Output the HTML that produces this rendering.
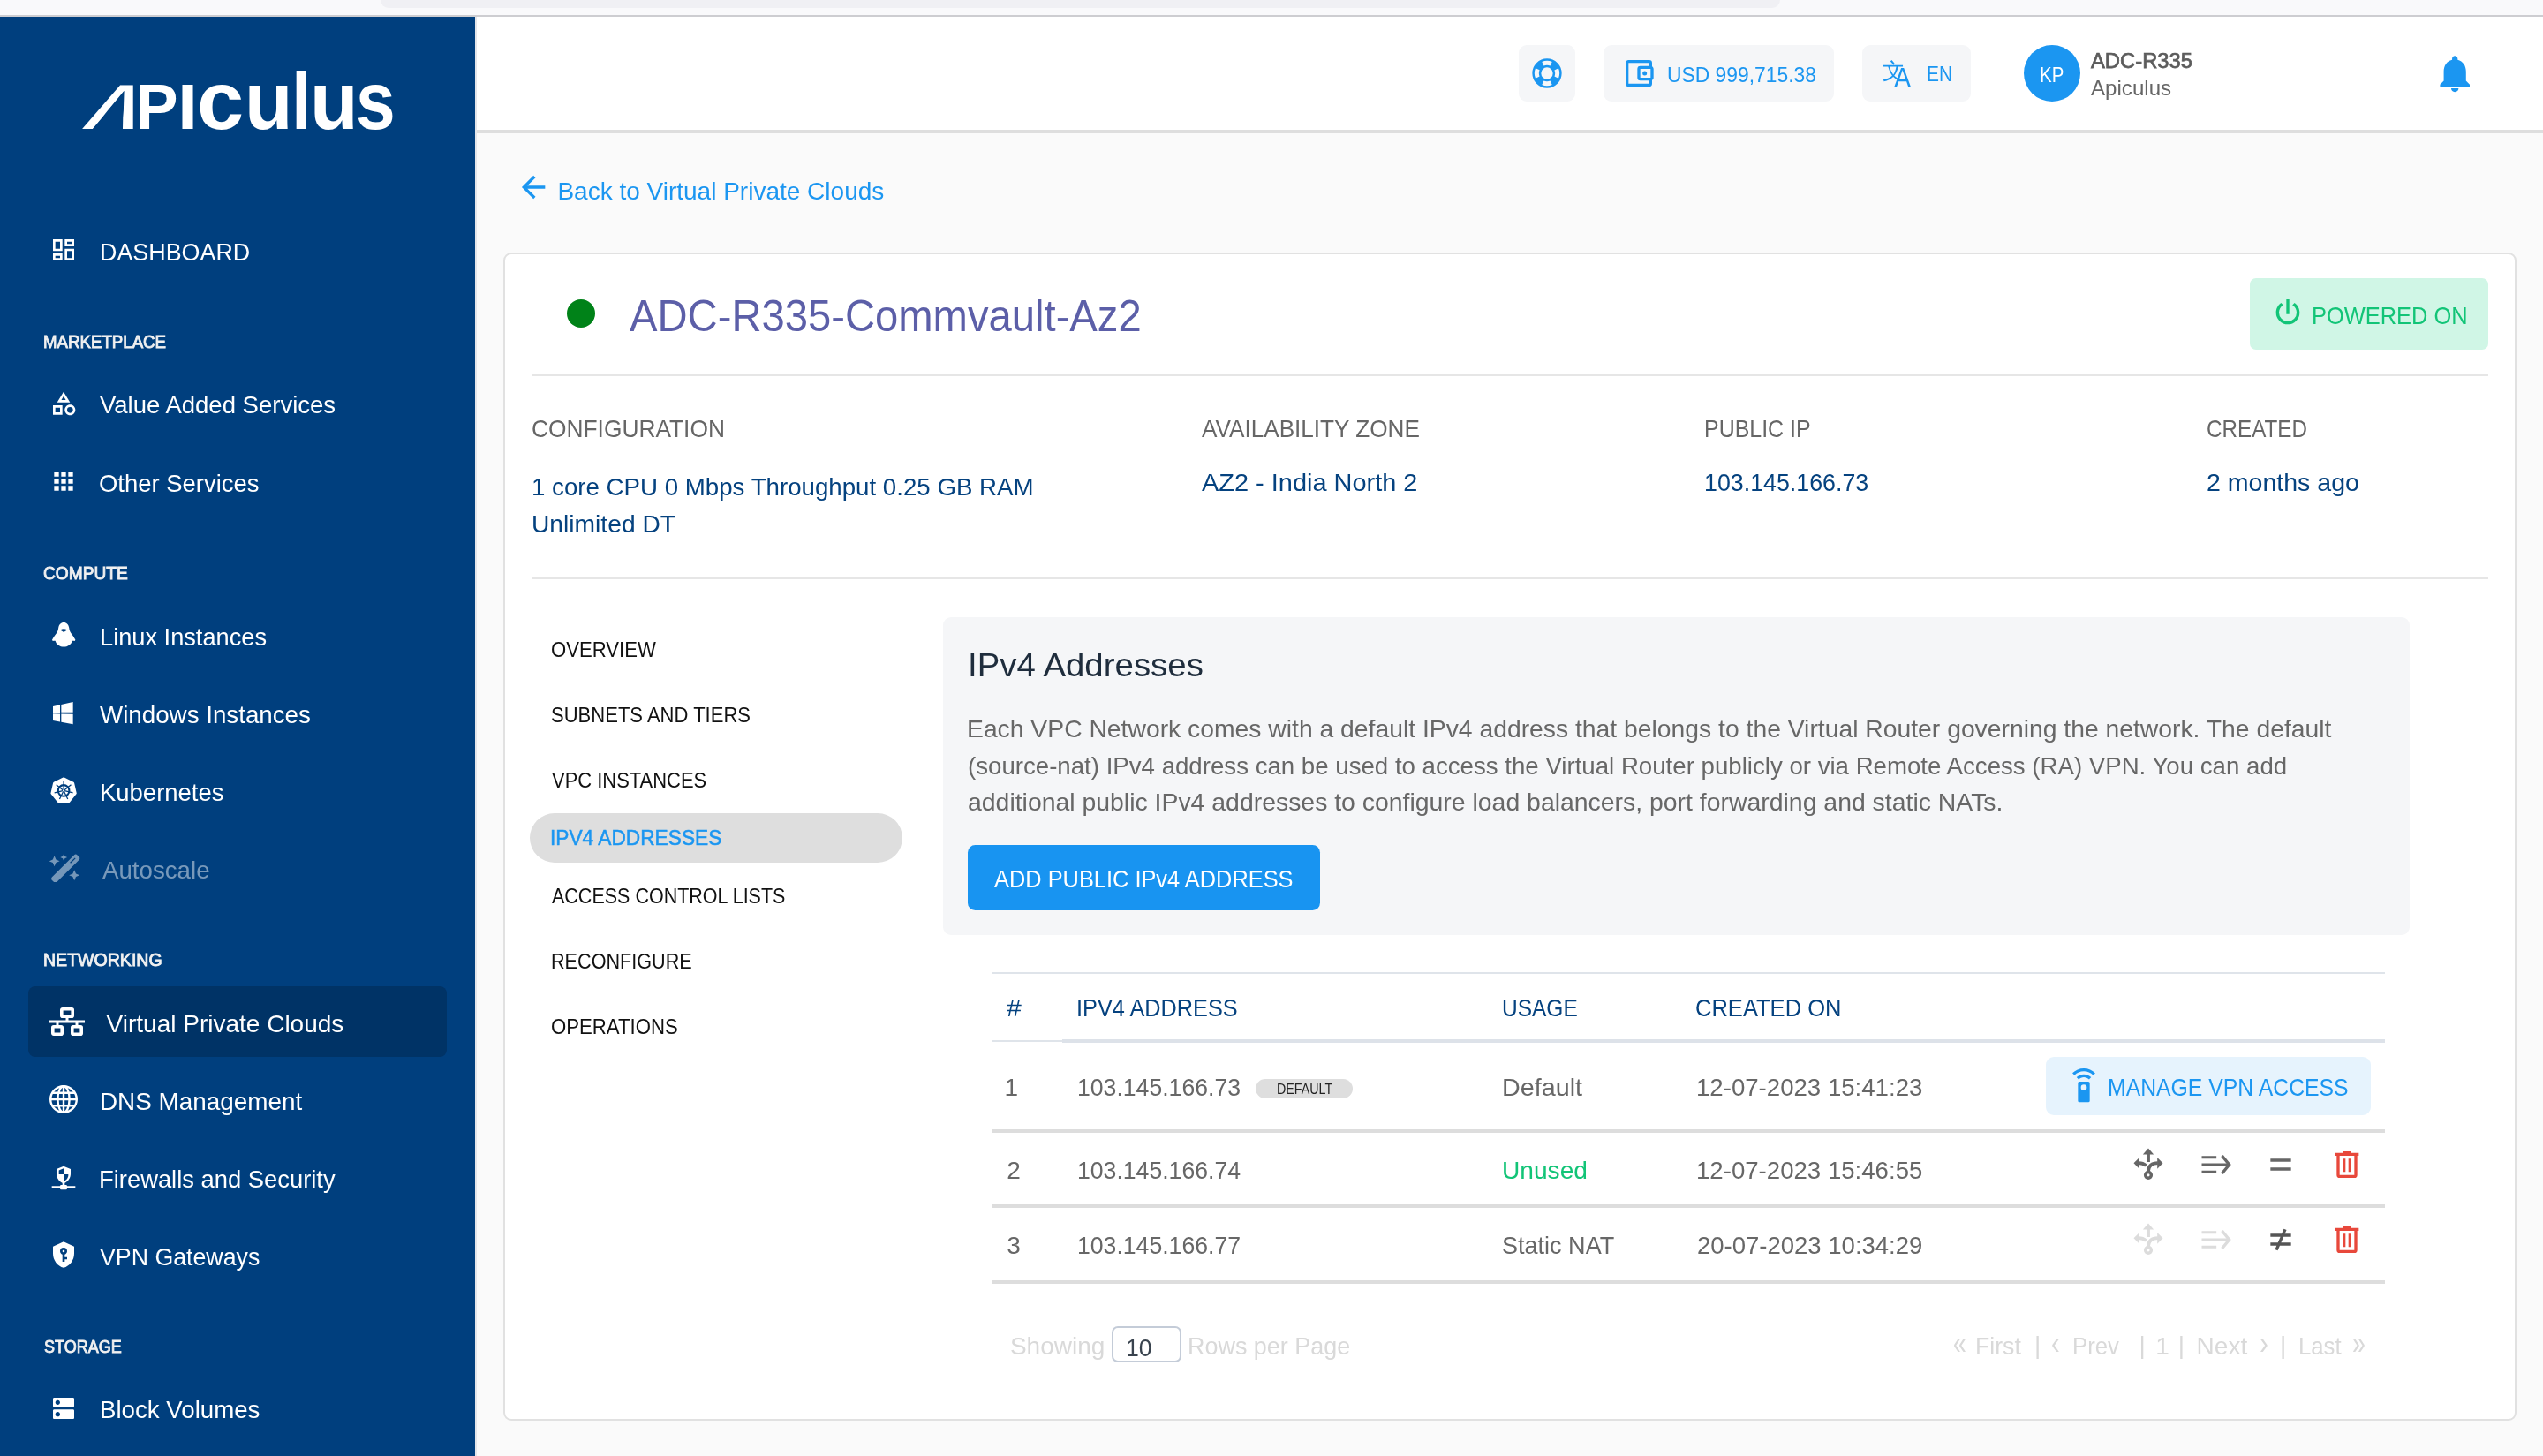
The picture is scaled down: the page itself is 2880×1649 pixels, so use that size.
<!DOCTYPE html>
<html lang="en"><head><meta charset="utf-8"><title>Apiculus - Virtual Private Clouds</title>
<style>
html,body{margin:0;padding:0}
body{width:2880px;height:1649px;position:relative;overflow:hidden;background:#fafafa;font-family:"Liberation Sans",sans-serif}
.t{position:absolute;white-space:pre;line-height:1;transform-origin:0 50%}
.b,.i{position:absolute;display:block}
.l{display:inline-block;position:relative;width:0;white-space:pre;line-height:1;transform-origin:0 50%;vertical-align:baseline}
#w{position:absolute;left:0;top:0;width:2880px;height:1649px;overflow:hidden;will-change:transform}
</style></head><body><div id="w">
<div class="b" style="left:0px;top:0px;width:2880px;height:17px;background:#f9f9fb;"></div>
<div class="b" style="left:431px;top:-12px;width:1585px;height:21px;background:#f0f0f4;border-radius:9px;"></div>
<div class="b" style="left:0px;top:17px;width:2880px;height:2px;background:#cdcdd1;"></div>
<nav>
<div class="b" style="left:0px;top:19px;width:538px;height:1630px;background:#003f7e;"></div>
<div class="b" style="left:538px;top:19px;width:2px;height:1630px;background:#e4e6ea;"></div>
<div class="b" style="left:0;top:67.5px;font-size:0;line-height:0;white-space:nowrap;color:#fff;font-weight:700"><span class="l" style="left:90.9px;font-size:72px;color:#fff;font-weight:700;transform:scaleX(1.19) skewX(-20deg);transform-origin:0 60.95px;clip-path:polygon(-3.00px -3.00px,56.00px -3.00px,56.00px 76.00px,40.33px 63.95px,40.33px 60.95px,35.94px 48.29px,33.62px 40.49px,25.98px 17.84px,18.38px 40.49px,16.06px 48.29px,11.66px 60.95px,11.66px 63.95px,-3.00px 76.00px);">A</span><span class="l" style="left:154.2px;font-size:72px;color:#fff;font-weight:700;transform:scaleX(0.9905);">P</span><span class="l" style="left:201.4px;font-size:72px;color:#fff;font-weight:700;transform:scaleX(1.1500);">I</span><span class="l" style="left:223.1px;font-size:92px;color:#fff;font-weight:700;transform:scaleX(1.0391);">c</span><span class="l" style="left:276.6px;font-size:92px;color:#fff;font-weight:700;transform:scaleX(0.9696);">u</span><span class="l" style="left:329.6px;font-size:90.5px;color:#fff;font-weight:700;transform:scaleX(0.9077);">l</span><span class="l" style="left:351.4px;font-size:92px;color:#fff;font-weight:700;transform:scaleX(0.9717);">u</span><span class="l" style="left:403.4px;font-size:92px;color:#fff;font-weight:700;transform:scaleX(0.8733);">s</span></div>
<svg class="i" style="left:56px;top:267.3px;" width="32" height="32" viewBox="0 0 24 24"><path fill="#fff" d="M19,5V7H15V5H19M9,5V11H5V5H9M19,13V19H15V13H19M9,17V19H5V17H9M21,3H13V9H21V3M11,3H3V13H11V3M21,11H13V21H21V11M11,15H3V21H11V15Z"/></svg>
<span class="t" style="left:113.3px;top:271.5px;font-size:28px;color:#fff;transform:scaleX(0.9601);">DASHBOARD</span>
<span class="t" style="left:48.7px;top:377.1px;font-size:20.2px;color:#f1f1f1;transform:scaleX(0.9250);-webkit-text-stroke:.85px #f1f1f1;">MARKETPLACE</span>
<svg class="i" style="left:56px;top:441.2px;" width="32" height="32" viewBox="0 0 24 24"><path fill="#fff" d="M11,13.5V21.5H3V13.5H11M9,15.5H5V19.5H9V15.5M12,2L17.5,11H6.5L12,2M12,5.86L10.08,9H13.92L12,5.86M17.5,13C20,13 22,15 22,17.5C22,20 20,22 17.5,22C15,22 13,20 13,17.5C13,15 15,13 17.5,13M17.5,15A2.5,2.5 0 0,0 15,17.5A2.5,2.5 0 0,0 17.5,20A2.5,2.5 0 0,0 20,17.5A2.5,2.5 0 0,0 17.5,15Z"/></svg>
<span class="t" style="left:112.5px;top:445.4px;font-size:28px;color:#fff;transform:scaleX(0.9823);">Value Added Services</span>
<svg class="i" style="left:56px;top:528.8px;" width="32" height="32" viewBox="0 0 24 24"><path fill="#fff" d="M16,20H20V16H16M16,14H20V10H16M10,8H14V4H10M16,8H20V4H16M10,14H14V10H10M4,14H8V10H4M4,20H8V16H4M10,20H14V16H10M4,8H8V4H4V8Z"/></svg>
<span class="t" style="left:112.0px;top:533.5px;font-size:28px;color:#fff;transform:scaleX(0.9805);">Other Services</span>
<span class="t" style="left:48.7px;top:638.8px;font-size:20.2px;color:#f1f1f1;transform:scaleX(0.9490);-webkit-text-stroke:.85px #f1f1f1;">COMPUTE</span>
<svg class="i" style="left:56px;top:703.1px;" width="32" height="32" viewBox="0 0 32 32"><path fill="#fff" d="M16.2,2C19.5,2 21.6,4.5 22.2,8C22.6,10.5 23,12 24.5,14.3C26.5,17.2 28.6,19.8 29.4,21.8L28.6,22.9C27.6,22.7 26.6,22.6 25.8,22.7C24.6,27 20.6,29.6 16.2,29.6C11.8,29.6 7.8,27 6.6,22.7C5.8,22.6 4.8,22.7 3.8,22.9L3,21.8C3.8,19.8 5.9,17.2 7.9,14.3C9.4,12 9.8,10.5 10.2,8C10.8,4.5 12.9,2 16.2,2Z"/><path fill="#003f7e" d="M12.1,10.4Q16.2,8.2 20.1,10.4L16.2,12.9Z"/></svg>
<span class="t" style="left:112.5px;top:707.5px;font-size:28px;color:#fff;transform:scaleX(0.9715);">Linux Instances</span>
<svg class="i" style="left:56px;top:790.8px;" width="32" height="32" viewBox="0 0 24 24"><path fill="#fff" d="M3,12V6.75L9,5.43V11.91L3,12M20,3V11.75L10,11.9V5.21L20,3M3,13L9,13.09V19.9L3,18.75V13M20,13.25V22L10,20.09V13.1L20,13.25Z"/></svg>
<span class="t" style="left:112.5px;top:795.6px;font-size:28px;color:#fff;transform:scaleX(0.9904);">Windows Instances</span>
<svg class="i" style="left:56px;top:879.2px;" width="32" height="32" viewBox="0 0 32 32"><polygon fill="#fff" stroke="#fff" stroke-width="2.8" stroke-linejoin="round" points="16.10,2.85 26.73,7.97 29.36,19.48 22.00,28.70 10.20,28.70 2.84,19.48 5.47,7.97"/><g stroke="#003f7e" fill="none"><circle cx="16.1" cy="16.45" r="6.3" stroke-width="2.1"/><g stroke-width="1.3"><line x1="16.1" y1="16.45" x2="16.10" y2="5.75"/><line x1="16.1" y1="16.45" x2="24.47" y2="9.78"/><line x1="16.1" y1="16.45" x2="26.53" y2="18.83"/><line x1="16.1" y1="16.45" x2="20.74" y2="26.09"/><line x1="16.1" y1="16.45" x2="11.46" y2="26.09"/><line x1="16.1" y1="16.45" x2="5.67" y2="18.83"/><line x1="16.1" y1="16.45" x2="7.73" y2="9.78"/></g></g><circle cx="16.1" cy="16.45" r="1.1" fill="#fff"/></svg>
<span class="t" style="left:112.8px;top:883.6px;font-size:28px;color:#fff;transform:scaleX(0.9807);">Kubernetes</span>
<svg class="i" style="left:55.9px;top:966.8px;opacity:.46;" width="36" height="32" viewBox="0 0 36 32"><g fill="#fff"><rect x="-3.9" y="-20.2" width="7.8" height="40.4" rx="2.6" transform="translate(18.2,16.6) rotate(45)"/><polygon points="5.60,2.30 7.40,6.50 11.60,8.30 7.40,10.10 5.60,14.30 3.80,10.10 -0.40,8.30 3.80,6.50"/><polygon points="16.20,0.10 17.37,2.83 20.10,4.00 17.37,5.17 16.20,7.90 15.03,5.17 12.30,4.00 15.03,2.83"/><polygon points="28.20,18.20 30.00,22.40 34.20,24.20 30.00,26.00 28.20,30.20 26.40,26.00 22.20,24.20 26.40,22.40"/></g><path stroke="#003f7e" stroke-width="1.3" d="M23.6,10.3L29.2,4.9" fill="none"/></svg>
<span class="t" style="left:116.4px;top:971.7px;font-size:28px;color:rgba(255,255,255,.47);transform:scaleX(0.9886);">Autoscale</span>
<span class="t" style="left:48.6px;top:1076.5px;font-size:20.2px;color:#f1f1f1;transform:scaleX(0.9682);-webkit-text-stroke:.85px #f1f1f1;">NETWORKING</span>
<div class="b" style="left:32px;top:1117px;width:474px;height:80px;background:#003366;border-radius:8px;"></div>
<svg class="i" style="left:56px;top:1141px;" width="40" height="32" viewBox="0 0 40 32"><g fill="none" stroke="#fff" stroke-width="3.6" stroke-linejoin="round"><rect x="13.8" y="1.8" width="12.4" height="8.4" rx="1"/><rect x="3.8" y="21.8" width="10.4" height="8.4" rx="1"/><rect x="25.8" y="21.8" width="10.4" height="8.4" rx="1"/></g><path fill="#fff" d="M0,14.6H40V17.6H0zM18.5,10H21.5V16H18.5zM7.5,16H10.5V22H7.5zM29.5,16H32.5V22H29.5z"/></svg>
<span class="t" style="left:120.6px;top:1145.5px;font-size:28px;color:#fff;">Virtual Private Clouds</span>
<svg class="i" style="left:56px;top:1229px;" width="32" height="32" viewBox="0 0 32 32"><g fill="none" stroke="#fff" stroke-width="2.4"><circle cx="16" cy="16" r="14.8"/><ellipse cx="16" cy="16" rx="6.6" ry="14.8"/><path d="M16,1.2V30.8M1.2,16H30.8M3.2,8.7H28.8M3.2,23.3H28.8"/></g></svg>
<span class="t" style="left:113.0px;top:1234.0px;font-size:28px;color:#fff;transform:scaleX(0.9950);">DNS Management</span>
<svg class="i" style="left:56px;top:1318px;" width="32" height="32" viewBox="0 0 24 24"><path fill="#fff" d="M13,18H14A1,1 0 0,1 15,19H22V21H15A1,1 0 0,1 14,22H10A1,1 0 0,1 9,21H2V19H9A1,1 0 0,1 10,18H11V16.34C8.07,15.13 6,12 6,8.5V4.5L12,2L18,4.5V8.5C18,12 15.93,15.13 13,16.34V18M12,4L8,5.69V9H12V4M12,9V15C13.91,14.53 16,12.06 16,10V9H12Z"/></svg>
<span class="t" style="left:112.4px;top:1321.8px;font-size:28px;color:#fff;transform:scaleX(0.9773);">Firewalls and Security</span>
<svg class="i" style="left:55.7px;top:1404.8px;" width="32" height="32" viewBox="0 0 24 24"><path fill="#fff" d="M12,8A1,1 0 0,1 13,9A1,1 0 0,1 12,10A1,1 0 0,1 11,9A1,1 0 0,1 12,8M21,11C21,16.55 17.16,21.74 12,23C6.84,21.74 3,16.55 3,11V5L12,1L21,5V11M12,6A3,3 0 0,0 9,9C9,10.31 9.83,11.42 11,11.83V18H13V16H15V14H13V11.83C14.17,11.42 15,10.31 15,9A3,3 0 0,0 12,6Z"/></svg>
<span class="t" style="left:112.7px;top:1409.7px;font-size:28px;color:#fff;transform:scaleX(0.9547);">VPN Gateways</span>
<span class="t" style="left:49.6px;top:1514.5px;font-size:20.2px;color:#f1f1f1;transform:scaleX(0.8919);-webkit-text-stroke:.85px #f1f1f1;">STORAGE</span>
<svg class="i" style="left:55.8px;top:1579.3px;" width="32" height="32" viewBox="0 0 24 24"><path fill="#fff" d="M20,13H4c-.55,0-1,.45-1,1v6c0,.55.45,1,1,1h16c.55,0,1-.45,1-1v-6c0-.55-.45-1-1-1zM7,19c-1.1,0-2-.9-2-2s.9-2,2-2,2,.9,2,2-.9,2-2,2zM20,3H4c-.55,0-1,.45-1,1v6c0,.55.45,1,1,1h16c.55,0,1-.45,1-1V4c0-.55-.45-1-1-1zM7,9c-1.1,0-2-.9-2-2s.9-2,2-2,2,.9,2,2-.9,2-2,2z"/></svg>
<span class="t" style="left:112.5px;top:1583.0px;font-size:28px;color:#fff;transform:scaleX(0.9881);">Block Volumes</span>
</nav>
<header>
<div class="b" style="left:540px;top:19px;width:2340px;height:128px;background:#fff;"></div>
<div class="b" style="left:540px;top:147px;width:2340px;height:4px;background:#dedede;"></div>
<div class="b" style="left:1720px;top:51px;width:64px;height:64px;background:#f5f6f8;border-radius:9px;"></div>
<svg class="i" style="left:1732px;top:63px;" width="40" height="40" viewBox="0 0 24 24"><path fill="#1b96f1" d="M19.79,15.41C20.74,13.24 20.74,10.75 19.79,8.59L17.05,9.83C17.65,11.21 17.65,12.78 17.06,14.17L19.79,15.41M15.42,4.21C13.25,3.26 10.76,3.26 8.59,4.21L9.83,6.94C11.22,6.35 12.79,6.35 14.18,6.95L15.42,4.21M4.21,8.58C3.26,10.76 3.26,13.24 4.21,15.42L6.95,14.17C6.35,12.79 6.35,11.21 6.95,9.82L4.21,8.58M8.59,19.79C10.76,20.74 13.25,20.74 15.42,19.78L14.18,17.05C12.8,17.65 11.22,17.65 9.84,17.06L8.59,19.79M12,2A10,10 0 0,1 22,12A10,10 0 0,1 12,22A10,10 0 0,1 2,12A10,10 0 0,1 12,2M12,8A4,4 0 0,0 8,12A4,4 0 0,0 12,16A4,4 0 0,0 16,12A4,4 0 0,0 12,8Z"/></svg>
<div class="b" style="left:1816px;top:51px;width:261px;height:64px;background:#f5f6f8;border-radius:9px;"></div>
<svg class="i" style="left:1836.2px;top:63px;" width="40" height="40" viewBox="0 0 24 24"><path fill="#1b96f1" d="M5,3C3.89,3 3,3.9 3,5V19A2,2 0 0,0 5,21H19A2,2 0 0,0 21,19V16.72C21.59,16.37 22,15.74 22,15V9C22,8.26 21.59,7.63 21,7.28V5A2,2 0 0,0 19,3H5M5,5H19V7H13A2,2 0 0,0 11,9V15A2,2 0 0,0 13,17H19V19H5V5M13,9H20V15H13V9M16,10.5A1.5,1.5 0 0,0 14.5,12A1.5,1.5 0 0,0 16,13.5A1.5,1.5 0 0,0 17.5,12A1.5,1.5 0 0,0 16,10.5Z"/></svg>
<span class="t" style="left:1887.8px;top:73.6px;font-size:23.4px;color:#1b96f1;transform:scaleX(0.9769);">USD 999,715.38</span>
<div class="b" style="left:2109px;top:51px;width:123px;height:64px;background:#f5f6f8;border-radius:9px;"></div>
<span class="t" style="left:2131.5px;top:68.0px;font-size:25px;color:#1b96f1;font-family:"Liberation Sans","Noto Sans CJK SC",sans-serif;font-weight:700;transform:scale(0.95,1.14);transform-origin:0 100%;">文</span>
<span class="t" style="left:2145.2px;top:73.3px;font-size:30.5px;color:#1b96f1;transform:scaleX(0.9429);">A</span>
<span class="t" style="left:2182.2px;top:73.1px;font-size:23.4px;color:#1b96f1;transform:scaleX(0.8952);">EN</span>
<div class="b" style="left:2292px;top:51px;width:64px;height:64px;background:#1b96f1;border-radius:32px;"></div>
<span class="t" style="left:2310.3px;top:72.9px;font-size:23.8px;color:#fff;transform:scaleX(0.8603);">KP</span>
<span class="t" style="left:2368.0px;top:56.5px;font-size:24.1px;color:#5c5c5c;transform:scaleX(0.9871);-webkit-text-stroke:.75px #5c5c5c;">ADC-R335</span>
<span class="t" style="left:2368.1px;top:89.4px;font-size:23.6px;color:#666;transform:scaleX(1.0217);">Apiculus</span>
<svg class="i" style="left:2754.8px;top:58.3px;" width="50.4" height="50.4" viewBox="0 0 24 24"><path fill="#1b96f1" d="M12 22c1.1 0 2-.9 2-2h-4c0 1.1.89 2 2 2zm6-6v-5c0-3.07-1.64-5.64-4.5-6.32V4c0-.83-.67-1.5-1.5-1.5s-1.5.67-1.5 1.5v.68C7.63 5.36 6 7.92 6 11v5l-2 2v1h16v-1l-2-2z"/></svg>
</header>
<main>
<svg class="i" style="left:584px;top:192.4px;" width="40" height="40" viewBox="0 0 24 24"><path fill="#1b96f1" d="M20,11V13H8L13.5,18.5L12.08,19.92L4.16,12L12.08,4.08L13.5,5.5L8,11H20Z"/></svg>
<span class="t" style="left:631.4px;top:202.7px;font-size:28px;color:#1b96f1;">Back to Virtual Private Clouds</span>
<div class="b" style="left:570px;top:286px;width:2276px;height:1319px;background:#fff;border:2px solid #e1e1e1;border-radius:9px"></div>
<div class="b" style="left:642px;top:339px;width:32px;height:32px;background:#008218;border-radius:16px;"></div>
<span class="t" style="left:713.2px;top:332.7px;font-size:50px;color:#5c5fa8;transform:scaleX(0.9441);">ADC-R335-Commvault-Az2</span>
<div class="b" style="left:2548px;top:315px;width:270px;height:80.5px;background:#d0f6e6;border-radius:7px;"></div>
<svg class="i" style="left:2570.7px;top:333.7px;" width="40" height="40" viewBox="0 0 24 24"><path fill="#12c477" d="M16.56,5.44L15.11,6.89C16.84,7.94 18,9.83 18,12A6,6 0 0,1 12,18A6,6 0 0,1 6,12C6,9.83 7.16,7.94 8.88,6.88L7.44,5.44C5.36,6.88 4,9.28 4,12A8,8 0 0,0 12,20A8,8 0 0,0 20,12C20,9.28 18.64,6.88 16.56,5.44M13,3H11V13H13"/></svg>
<span class="t" style="left:2618.2px;top:343.6px;font-size:28px;color:#12c477;transform:scaleX(0.9078);">POWERED ON</span>
<div class="b" style="left:602px;top:424px;width:2216px;height:2px;background:#e6e6e6;"></div>
<span class="t" style="left:602.1px;top:472.1px;font-size:28px;color:#666;transform:scaleX(0.9404);">CONFIGURATION</span>
<span class="t" style="left:1361.1px;top:472.1px;font-size:28px;color:#666;transform:scaleX(0.9332);">AVAILABILITY ZONE</span>
<span class="t" style="left:1930.2px;top:472.1px;font-size:28px;color:#666;transform:scaleX(0.8907);">PUBLIC IP</span>
<span class="t" style="left:2499.0px;top:472.1px;font-size:28px;color:#666;transform:scaleX(0.8649);">CREATED</span>
<span class="t" style="left:601.5px;top:537.5px;font-size:28px;color:#05427f;transform:scaleX(0.9883);">1 core CPU 0 Mbps Throughput 0.25 GB RAM</span>
<span class="t" style="left:601.7px;top:579.5px;font-size:28px;color:#05427f;transform:scaleX(1.0075);">Unlimited DT</span>
<span class="t" style="left:1361.1px;top:532.5px;font-size:28px;color:#05427f;transform:scaleX(1.0331);">AZ2 - India North 2</span>
<span class="t" style="left:1930.1px;top:532.5px;font-size:28px;color:#05427f;transform:scaleX(0.9565);">103.145.166.73</span>
<span class="t" style="left:2499.2px;top:532.5px;font-size:28px;color:#05427f;transform:scaleX(1.0191);">2 months ago</span>
<div class="b" style="left:602px;top:654px;width:2216px;height:2px;background:#e6e6e6;"></div>
<span class="t" style="left:623.7px;top:723.5px;font-size:24.2px;color:#111;transform:scaleX(0.9141);">OVERVIEW</span>
<span class="t" style="left:623.7px;top:797.9px;font-size:24.2px;color:#111;transform:scaleX(0.9106);">SUBNETS AND TIERS</span>
<span class="t" style="left:624.6px;top:871.9px;font-size:24.2px;color:#111;transform:scaleX(0.9075);">VPC INSTANCES</span>
<div class="b" style="left:600px;top:921px;width:422px;height:56px;background:#dedede;border-radius:28px;"></div>
<span class="t" style="left:623.0px;top:937.3px;font-size:24.2px;color:#1b96f1;transform:scaleX(0.9388);-webkit-text-stroke:.55px #1b96f1;">IPV4 ADDRESSES</span>
<span class="t" style="left:624.6px;top:1003.4px;font-size:24.2px;color:#111;transform:scaleX(0.8889);">ACCESS CONTROL LISTS</span>
<span class="t" style="left:623.7px;top:1077.4px;font-size:24.2px;color:#111;transform:scaleX(0.8936);">RECONFIGURE</span>
<span class="t" style="left:623.7px;top:1151.3px;font-size:24.2px;color:#111;transform:scaleX(0.9167);">OPERATIONS</span>
<div class="b" style="left:1068px;top:699px;width:1661px;height:360px;background:#f5f6f8;border-radius:9px;"></div>
<span class="t" style="left:1095.6px;top:735.3px;font-size:37.8px;color:#1f2d3d;transform:scaleX(1.0161);">IPv4 Addresses</span>
<span class="t" style="left:1095.2px;top:811.5px;font-size:28px;color:#676767;transform:scaleX(1.0108);">Each VPC Network comes with a default IPv4 address that belongs to the Virtual Router governing the network. The default</span>
<span class="t" style="left:1096.4px;top:853.5px;font-size:28px;color:#676767;transform:scaleX(0.9870);">(source-nat) IPv4 address can be used to access the Virtual Router publicly or via Remote Access (RA) VPN. You can add</span>
<span class="t" style="left:1096.2px;top:895.3px;font-size:28px;color:#676767;transform:scaleX(1.0143);">additional public IPv4 addresses to configure load balancers, port forwarding and static NATs.</span>
<div class="b" style="left:1096px;top:957px;width:399px;height:74px;background:#1894f1;border-radius:8.5px;"></div>
<span class="t" style="left:1126.3px;top:981.5px;font-size:28px;color:#fff;transform:scaleX(0.9065);">ADD PUBLIC IPv4 ADDRESS</span>
<div class="b" style="left:1124px;top:1100.5px;width:1577px;height:2px;background:#dfe4ea;"></div>
<span class="t" style="left:1140.3px;top:1127.6px;font-size:28px;color:#05427f;transform:scaleX(1.0813);">#</span>
<span class="t" style="left:1218.8px;top:1127.6px;font-size:28px;color:#05427f;transform:scaleX(0.9032);">IPV4 ADDRESS</span>
<span class="t" style="left:1701.2px;top:1127.6px;font-size:28px;color:#05427f;transform:scaleX(0.8747);">USAGE</span>
<span class="t" style="left:1920.4px;top:1127.6px;font-size:28px;color:#05427f;transform:scaleX(0.9115);">CREATED ON</span>
<div class="b" style="left:1124px;top:1178px;width:79px;height:2px;background:#dfe4ea;"></div>
<div class="b" style="left:1203px;top:1177px;width:1498px;height:4px;background:#dde2e9;"></div>
<span class="t" style="left:1137.4px;top:1217.7px;font-size:28px;color:#676767;">1</span>
<span class="t" style="left:1220.3px;top:1217.7px;font-size:28px;color:#676767;transform:scaleX(0.9507);">103.145.166.73</span>
<span class="t" style="left:1700.8px;top:1217.7px;font-size:28px;color:#676767;transform:scaleX(1.0260);">Default</span>
<span class="t" style="left:1920.7px;top:1217.7px;font-size:28px;color:#676767;transform:scaleX(0.9859);">12-07-2023 15:41:23</span>
<span class="t" style="left:1140.2px;top:1311.9px;font-size:28px;color:#676767;">2</span>
<span class="t" style="left:1220.3px;top:1311.9px;font-size:28px;color:#676767;transform:scaleX(0.9507);">103.145.166.74</span>
<span class="t" style="left:1700.9px;top:1311.9px;font-size:28px;color:#12c477;transform:scaleX(1.0050);">Unused</span>
<span class="t" style="left:1920.7px;top:1311.9px;font-size:28px;color:#676767;transform:scaleX(0.9859);">12-07-2023 15:46:55</span>
<span class="t" style="left:1140.2px;top:1397.1px;font-size:28px;color:#676767;">3</span>
<span class="t" style="left:1220.3px;top:1397.1px;font-size:28px;color:#676767;transform:scaleX(0.9507);">103.145.166.77</span>
<span class="t" style="left:1701.2px;top:1397.1px;font-size:28px;color:#676767;transform:scaleX(0.9654);">Static NAT</span>
<span class="t" style="left:1921.7px;top:1397.1px;font-size:28px;color:#676767;transform:scaleX(0.9821);">20-07-2023 10:34:29</span>
<div class="b" style="left:1421.7px;top:1222px;width:110.3px;height:21.8px;background:#dedede;border-radius:11px;"></div>
<span class="t" style="left:1446.0px;top:1224.5px;font-size:17.4px;color:#222;transform:scaleX(0.8211);">DEFAULT</span>
<div class="b" style="left:1124px;top:1278.6px;width:1577px;height:4px;background:#dddddd;"></div>
<div class="b" style="left:1124px;top:1364px;width:1577px;height:4px;background:#dddddd;"></div>
<div class="b" style="left:1124px;top:1450px;width:1577px;height:4px;background:#dddddd;"></div>
<div class="b" style="left:2317px;top:1197px;width:368px;height:65.5px;background:#e6f3fd;border-radius:9px;"></div>
<svg class="i" style="left:2340px;top:1210px;" width="40" height="40" viewBox="0 0 24 24"><path fill="#1b96f1" d="M12,0C8.96,0 6.21,1.23 4.22,3.22L5.63,4.63C7.26,3 9.5,2 12,2C14.5,2 16.74,3 18.36,4.64L19.77,3.23C17.79,1.23 15.04,0 12,0M7.05,6.05L8.46,7.46C9.37,6.56 10.62,6 12,6C13.38,6 14.63,6.56 15.54,7.46L16.95,6.05C15.68,4.78 13.93,4 12,4C10.07,4 8.32,4.78 7.05,6.05M12,15A2,2 0 0,1 10,13A2,2 0 0,1 12,11A2,2 0 0,1 14,13A2,2 0 0,1 12,15M15,9H9A1,1 0 0,0 8,10V22A1,1 0 0,0 9,23H15A1,1 0 0,0 16,22V10A1,1 0 0,0 15,9Z"/></svg>
<span class="t" style="left:2387.4px;top:1217.6px;font-size:28px;color:#1b96f1;transform:scaleX(0.8848);">MANAGE VPN ACCESS</span>
<svg class="i" style="left:2413px;top:1299px;" width="40" height="40" viewBox="0 0 24 24"><g fill="#666" stroke="none"><path d="M12,0.9L15.7,5.1H13.15V10.2H10.85V5.1H8.3Z"/><path d="M2.1,11L5.9,7.2V14.8Z"/><path d="M21.9,11L18.1,7.2V14.8Z"/></g><g fill="none" stroke="#666" stroke-width="2.3"><path d="M5.5,10.9Q8.4,10.9 10.5,12.7"/><path d="M18.5,10.9Q12.4,10.9 12,16.3"/><circle cx="12" cy="19.1" r="2" stroke-width="2.1"/></g></svg>
<svg class="i" style="left:2489.5px;top:1299px;" width="40" height="40" viewBox="0 0 24 24"><path fill="#666" d="M2.1,6.1H12.1V7.9H2.1zM2.1,11.05H20.3V12.95H2.1zM2.1,16.1H12.1V17.9H2.1z"/><path fill="none" stroke="#666" stroke-width="2" d="M15.9,6L20.8,12L15.9,18"/></svg>
<svg class="i" style="left:2413px;top:1384px;" width="40" height="40" viewBox="0 0 24 24"><g fill="#dcdcdc" stroke="none"><path d="M12,0.9L15.7,5.1H13.15V10.2H10.85V5.1H8.3Z"/><path d="M2.1,11L5.9,7.2V14.8Z"/><path d="M21.9,11L18.1,7.2V14.8Z"/></g><g fill="none" stroke="#dcdcdc" stroke-width="2.3"><path d="M5.5,10.9Q8.4,10.9 10.5,12.7"/><path d="M18.5,10.9Q12.4,10.9 12,16.3"/><circle cx="12" cy="19.1" r="2" stroke-width="2.1"/></g></svg>
<svg class="i" style="left:2489.5px;top:1384px;" width="40" height="40" viewBox="0 0 24 24"><path fill="#dcdcdc" d="M2.1,6.1H12.1V7.9H2.1zM2.1,11.05H20.3V12.95H2.1zM2.1,16.1H12.1V17.9H2.1z"/><path fill="none" stroke="#dcdcdc" stroke-width="2" d="M15.9,6L20.8,12L15.9,18"/></svg>
<svg class="i" style="left:2563px;top:1299px;" width="40" height="40" viewBox="0 0 24 24"><path fill="#666" d="M19,10H5V8H19V10M19,16H5V14H19V16Z"/></svg>
<svg class="i" style="left:2563px;top:1384px;" width="40" height="40" viewBox="0 0 24 24"><path fill="#555" d="M14.08,4.61L15.92,5.4L14.8,8H19V10H13.95L12.23,14H19V16H11.38L9.92,19.4L8.08,18.61L9.2,16H5V14H10.06L11.77,10H5V8H12.63L14.08,4.61Z"/></svg>
<svg class="i" style="left:2638px;top:1299px;" width="40" height="40" viewBox="0 0 24 24"><path fill="#e8483b" d="M9,3V4H4V6H5V19A2,2 0 0,0 7,21H17A2,2 0 0,0 19,19V6H20V4H15V3H9M7,6H17V19H7V6M9,8V17H11V8H9M13,8V17H15V8H13Z"/></svg>
<svg class="i" style="left:2638px;top:1384px;" width="40" height="40" viewBox="0 0 24 24"><path fill="#e8483b" d="M9,3V4H4V6H5V19A2,2 0 0,0 7,21H17A2,2 0 0,0 19,19V6H20V4H15V3H9M7,6H17V19H7V6M9,8V17H11V8H9M13,8V17H15V8H13Z"/></svg>
<span class="t" style="left:1143.9px;top:1510.5px;font-size:28px;color:#d9d9d9;">Showing</span>
<div class="b" style="left:1259.3px;top:1502.3px;width:75px;height:37.2px;border:2px solid #c4ccd8;border-radius:7px;background:#fff"></div>
<span class="t" style="left:1275.2px;top:1512.7px;font-size:28px;color:#39434e;transform:scaleX(0.9520);">10</span>
<span class="t" style="left:1345.4px;top:1510.5px;font-size:28px;color:#d9d9d9;transform:scaleX(0.9621);">Rows per Page</span>
<span class="t" style="left:2211.8px;top:1503.9px;font-size:36px;color:#d9d9d9;transform:scaleX(0.7389);">«</span>
<span class="t" style="left:2236.8px;top:1510.7px;font-size:28px;color:#d9d9d9;transform:scaleX(0.9516);">First</span>
<span class="t" style="left:2304.0px;top:1509.5px;font-size:28px;color:#d9d9d9;">|</span>
<span class="t" style="left:2323.1px;top:1503.9px;font-size:36px;color:#d9d9d9;transform:scaleX(0.8200);">‹</span>
<span class="t" style="left:2346.7px;top:1510.7px;font-size:28px;color:#d9d9d9;transform:scaleX(0.9195);">Prev</span>
<span class="t" style="left:2422.6px;top:1509.5px;font-size:28px;color:#d9d9d9;">|</span>
<span class="t" style="left:2441.3px;top:1510.7px;font-size:28px;color:#d9d9d9;">1</span>
<span class="t" style="left:2466.7px;top:1509.5px;font-size:28px;color:#d9d9d9;">|</span>
<span class="t" style="left:2487.6px;top:1510.7px;font-size:28px;color:#d9d9d9;">Next</span>
<span class="t" style="left:2558.9px;top:1503.9px;font-size:36px;color:#d9d9d9;transform:scaleX(0.8200);">›</span>
<span class="t" style="left:2582.0px;top:1509.5px;font-size:28px;color:#d9d9d9;">|</span>
<span class="t" style="left:2602.9px;top:1510.7px;font-size:28px;color:#d9d9d9;transform:scaleX(0.9190);">Last</span>
<span class="t" style="left:2663.7px;top:1503.9px;font-size:36px;color:#d9d9d9;transform:scaleX(0.7389);">»</span>
</main>
</div></body></html>
